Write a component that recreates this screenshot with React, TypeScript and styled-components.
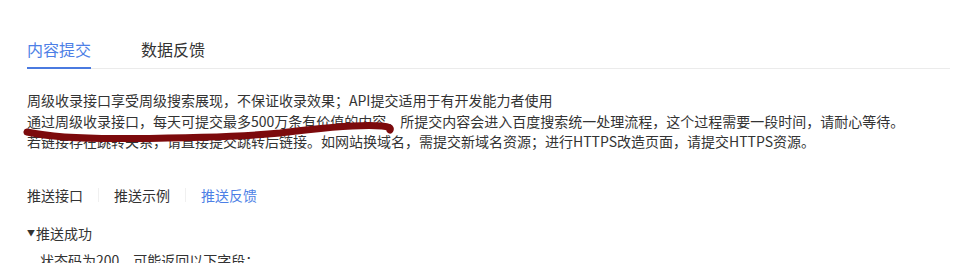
import styled, { createGlobalStyle } from 'styled-components'

const GlobalStyle = createGlobalStyle`
  html, body {
    margin: 0;
    padding: 0;
    background: #ffffff;
  }
  body {
    font-family: "Noto Sans CJK SC", "Noto Sans", sans-serif;
    color: #333333;
  }
`

const Page = styled.div`
  position: relative;
  width: 961px;
  height: 263px;
  overflow: hidden;
  box-sizing: border-box;
  padding: 37px 11px 0 27px;
`

const TabBar = styled.div`
  display: flex;
  gap: 50px;
  border-bottom: 1px solid #ebebeb;
`

const Tab = styled.div<{ $active?: boolean }>`
  font-size: 16px;
  line-height: 24px;
  padding-bottom: 6px;
  margin-bottom: -1px;
  color: ${(p) => (p.$active ? '#4d7fe6' : '#333333')};
  border-bottom: 2px solid ${(p) => (p.$active ? '#4a7ae0' : 'transparent')};
`

const Intro = styled.div`
  margin-top: 21px;
  font-size: 14px;
  line-height: 20.5px;
`

const Line = styled.p`
  margin: 0;
  white-space: nowrap;
`

const SubTabs = styled.div`
  display: flex;
  align-items: center;
  gap: 15px;
  margin-top: 33px;
  font-size: 14px;
  line-height: 20px;
`

const SubTab = styled.span<{ $active?: boolean }>`
  color: ${(p) => (p.$active ? '#4d7fe6' : '#333333')};
`

const Divider = styled.span`
  width: 1px;
  height: 14px;
  background: #f0f0f0;
`

const Section = styled.div`
  margin-top: 18px;
  font-size: 14px;
  line-height: 20px;
  display: flex;
  align-items: center;
  gap: 1px;
`

const Caret = styled.span`
  font-size: 8px;
  line-height: 20px;
  color: #333333;
`

const Detail = styled.p`
  margin: 7px 0 0;
  padding-left: 13px;
  font-size: 14px;
  line-height: 20px;
`

const Scribble = styled.svg`
  position: absolute;
  left: 20px;
  top: 115px;
  width: 380px;
  height: 30px;
  pointer-events: none;
`

export default function App() {
  return (
    <>
      <GlobalStyle />
      <Page>
        <TabBar>
          <Tab $active>内容提交</Tab>
          <Tab>数据反馈</Tab>
        </TabBar>

        <Intro>
          <Line>周级收录接口享受周级搜索展现，不保证收录效果；API提交适用于有开发能力者使用</Line>
          <Line>
            通过周级收录接口，每天可提交最多500万条有价值的内容，所提交内容会进入百度搜索统一处理流程，这个过程需要一段时间，请耐心等待。
          </Line>
          <Line>
            若链接存在跳转关系，请直接提交跳转后链接。如网站换域名，需提交新域名资源；进行HTTPS改造页面，请提交HTTPS资源。
          </Line>
        </Intro>

        <SubTabs>
          <SubTab>推送接口</SubTab>
          <Divider />
          <SubTab>推送示例</SubTab>
          <Divider />
          <SubTab $active>推送反馈</SubTab>
        </SubTabs>

        <Section>
          <Caret>▼</Caret>
          <span>推送成功</span>
        </Section>

        <Detail>状态码为200，可能返回以下字段：</Detail>

        {/* hand-drawn marker stroke over the screenshot */}
        <Scribble viewBox="0 0 380 30">
          <path
            d="M7,17 C30,22 70,24 110,23.5 C170,23 220,22 260,18 C300,13 340,9 362,11 Q372,12 370,15"
            fill="none"
            stroke="#7c0a0c"
            strokeWidth="7"
            strokeLinecap="round"
            strokeLinejoin="round"
          />
        </Scribble>
      </Page>
    </>
  )
}
